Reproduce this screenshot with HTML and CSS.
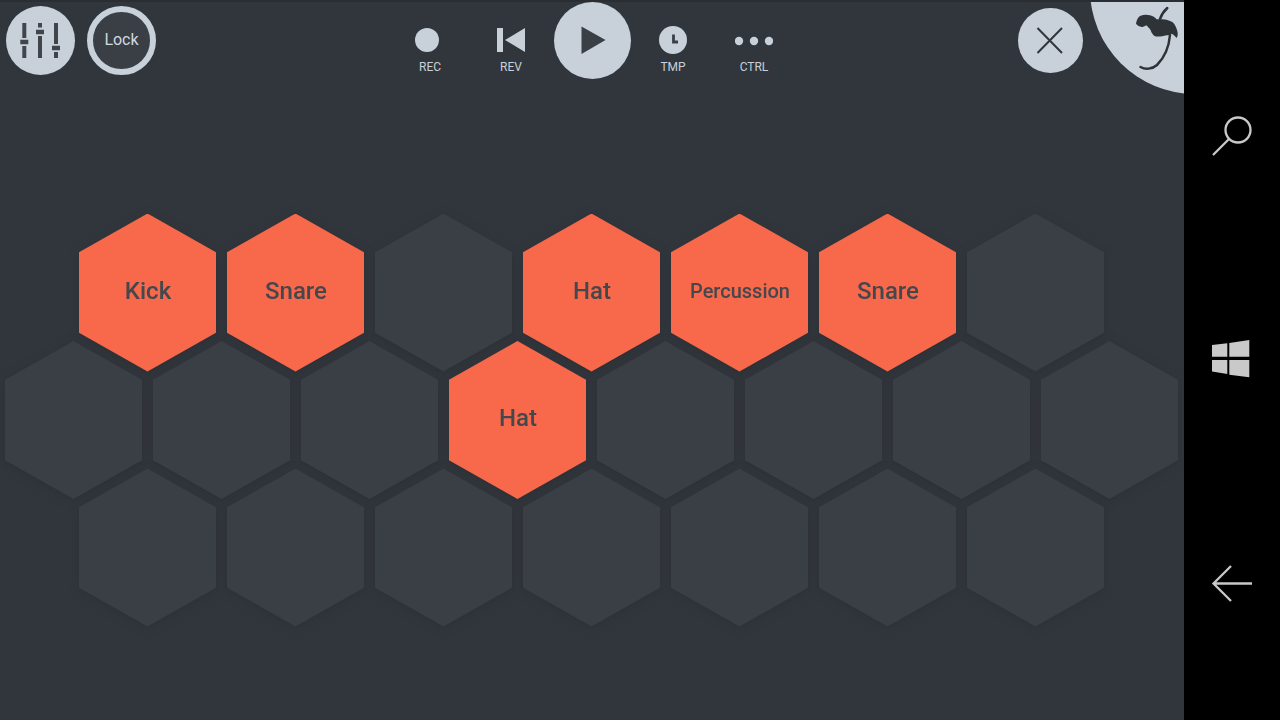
FILE: index.html
```html
<!DOCTYPE html>
<html>
<head>
    <meta charset="utf-8">
    <title>FL Studio Mobile - Pads</title>
    <link rel="stylesheet" href="styles.css">
</head>
<body>
    <div class="screen">
        <div class="app">
            <div class="topbar">
                <div class="tools-left">
                    <div class="round-btn">
                        <svg width="69" height="69" viewBox="0 0 69 69">
                            <path class="sliders" d="M18.300 17V32M18.300 40V52M34 17V21.500M34 30V52M50 17V38M50 46V52"/>
                            <path class="knobs" d="M14.300 36H22.300M30 26H38M46 42H54"/>
                        </svg>
                    </div>
                    <div class="round-btn lock-btn">Lock</div>
                </div>

                <div class="transport">
                    <div class="tool">
                        <div class="tool-icon"><svg class="rec-icon" width="24" height="28" viewBox="0 0 24 28"><circle cx="12" cy="14" r="12"/></svg></div>
                        <span>REC</span>
                    </div>
                    <div class="tool">
                        <div class="tool-icon"><svg width="28" height="28" viewBox="0 0 28 28"><path d="M0 2H6V26H0ZM28 2V26L8 14Z"/></svg></div>
                        <span>REV</span>
                    </div>
                    <div class="play-btn">
                        <svg width="77" height="77" viewBox="0 0 77 77"><path d="M27.500 24.500L51.500 38L27.500 52Z"/></svg>
                    </div>
                    <div class="tool">
                        <div class="tool-icon"><svg width="28" height="28" viewBox="0 0 28 28"><circle cx="14" cy="14" r="14"/><path class="clock-hand" d="M14.500 8.500V16H19"/></svg></div>
                        <span>TMP</span>
                    </div>
                    <div class="tool">
                        <div class="tool-icon"><svg width="38" height="28" viewBox="0 0 38 28"><circle cx="4" cy="15" r="4.200"/><circle cx="19" cy="15" r="4.200"/><circle cx="34" cy="15" r="4.200"/></svg></div>
                        <span>CTRL</span>
                    </div>
                </div>

                <div class="tools-right">
                    <div class="close-btn">
                        <svg width="65" height="65" viewBox="0 0 65 65"><path d="M19.500 20L44 45M44 20L19.500 45"/></svg>
                    </div>
                </div>
            </div>

            <div class="corner-logo">
                <svg class="fruit" width="50" height="70" viewBox="0 0 50 70">
                    <path class="fruit-line" d="M37.300 6C34 9 31.500 12.500 30 17M40 33C39 45 35 55 27 63C22 67.500 15 67.500 10.500 65"/>
                    <path d="M6 21.700C6.500 18 8 15.500 10 14C13.500 12.500 17 12.500 20 13.300C23 14 25 15.500 26.700 17.300C31 17 35 17 38 18.300C42 19.500 44 21 45 23.300C47 27 48 30 47.700 33.300L46.700 36C45 34 43.500 32.500 41.700 31.700C40 33 38.500 33.500 36.700 33.300C32 34.500 28 35 25 34.300C23 33 21.500 31 20.700 28.300C19 26 17.500 24 16 23.300C14.500 24.500 13 25.200 11.700 25C9.500 24.500 7.500 23.500 6 21.700Z"/>
                </svg>
            </div>

            <div class="pads">
                <div class="pad-row indent">
                    <div class="pad on"><div class="hex">Kick</div></div>
                    <div class="pad on"><div class="hex">Snare</div></div>
                    <div class="pad"><div class="hex"></div></div>
                    <div class="pad on"><div class="hex">Hat</div></div>
                    <div class="pad on"><div class="hex small">Percussion</div></div>
                    <div class="pad on"><div class="hex">Snare</div></div>
                    <div class="pad"><div class="hex"></div></div>
                </div>
                <div class="pad-row">
                    <div class="pad"><div class="hex"></div></div>
                    <div class="pad"><div class="hex"></div></div>
                    <div class="pad"><div class="hex"></div></div>
                    <div class="pad on"><div class="hex">Hat</div></div>
                    <div class="pad"><div class="hex"></div></div>
                    <div class="pad"><div class="hex"></div></div>
                    <div class="pad"><div class="hex"></div></div>
                    <div class="pad"><div class="hex"></div></div>
                </div>
                <div class="pad-row indent">
                    <div class="pad"><div class="hex"></div></div>
                    <div class="pad"><div class="hex"></div></div>
                    <div class="pad"><div class="hex"></div></div>
                    <div class="pad"><div class="hex"></div></div>
                    <div class="pad"><div class="hex"></div></div>
                    <div class="pad"><div class="hex"></div></div>
                    <div class="pad"><div class="hex"></div></div>
                </div>
            </div>
        </div>

        <div class="navbar">
            <svg width="48" height="48" viewBox="0 0 48 48"><circle cx="30" cy="19" r="12.500"/><path d="M21 28L5 44"/></svg>
            <svg width="48" height="48" viewBox="0 0 48 48"><path class="win" d="M4 10L19.300 8.300V21.700H4ZM21.300 8L41.300 5V21.700H21.300ZM4 25H19.300V39L4 36.500ZM21.300 25H41.300V42.300L21.300 39.700Z"/></svg>
            <svg width="48" height="48" viewBox="0 0 48 48"><path d="M23 7L5.500 24.500L23 42M5.500 24.500H44"/></svg>
        </div>
    </div>
</body>
</html>
```
FILE: styles.css
```css
* { box-sizing: border-box; }
body { margin: 0; background-color: #000; font-family: "Roboto", "Liberation Sans", sans-serif; overflow: hidden; }

.screen { display: flex; width: 1280px; height: 720px; }
.app { position: relative; width: 1184px; height: 720px; background-color: #31363c; border-top: solid 2px #2a2e33; overflow: hidden; }

/* top bar */
.topbar { display: grid; grid-template-columns: 1fr auto 1fr; height: 88px; }
.tools-left { display: flex; gap: 12px; padding: 4px 0 0 6px; }
.round-btn { display: flex; align-items: center; justify-content: center; width: 69px; height: 69px; border-radius: 50%; background-color: #c8d0da; }
.sliders { fill: none; stroke: #40454b; stroke-width: 4; }
.knobs { fill: none; stroke: #40454b; stroke-width: 4.500; }
.lock-btn { padding-bottom: 2px; background-color: #393f45; border: solid 6px #c8d0da; color: #d2d8e0; font-size: 16px; }

.transport { display: grid; grid-template-columns: repeat(5, 81px); justify-items: center; }
.tool { display: flex; flex-direction: column; align-items: center; padding-top: 24px; color: #c8d0da; font-size: 12px; }
.tool span { margin-top: 6px; line-height: 14px; }
.tool-icon { display: flex; height: 28px; }
.tool-icon svg { fill: #c8d0da; }
.rec-icon { margin-right: 6px; }
.clock-hand { fill: none; stroke: #393f45; stroke-width: 2.800; }
.play-btn { width: 77px; height: 77px; border-radius: 50%; background-color: #c8d0da; }
.play-btn svg { display: block; fill: #393f45; }

.tools-right { display: flex; justify-content: flex-end; padding: 6px 101px 0 0; }
.close-btn { width: 65px; height: 65px; border-radius: 50%; background-color: #c8d0da; }
.close-btn svg { display: block; fill: none; stroke: #31363c; stroke-width: 2; }

.corner-logo { position: absolute; left: 1090px; top: -118px; width: 210px; height: 210px; border-radius: 50%; background-color: #c8d0da; }
.fruit { position: absolute; left: 40px; top: 118px; fill: #2e3338; }
.fruit-line { fill: none; stroke: #2e3338; stroke-width: 2.500; stroke-linecap: round; }

/* pads */
.pads { padding: 123.500px 0 0 5px; }
.pad-row { display: flex; gap: 11px; }
.pad-row + .pad-row { margin-top: -30.500px; }
.indent { padding-left: 74px; }
.pad { width: 137px; height: 158px; filter: drop-shadow(0 2px 4px #2d3136); }
.hex { display: flex; align-items: center; justify-content: center; height: 100%; padding: 0 0 4px 1px; background-color: #393f45; clip-path: polygon(50% 0, 100% 24.500%, 100% 75.500%, 50% 100%, 0 75.500%, 0 24.500%); color: #44484d; font-size: 24px; font-weight: 500; }
.pad.on .hex { background-color: #f8684b; }
.hex.small { font-size: 20px; }

/* phone buttons */
.navbar { display: flex; flex-direction: column; justify-content: space-between; align-items: center; width: 96px; padding: 111px 0 113px; background-color: #000; }
.navbar svg { fill: none; stroke: #c9c9c9; stroke-width: 2.300; }
.navbar svg .win { fill: #c9c9c9; stroke: none; }
```
